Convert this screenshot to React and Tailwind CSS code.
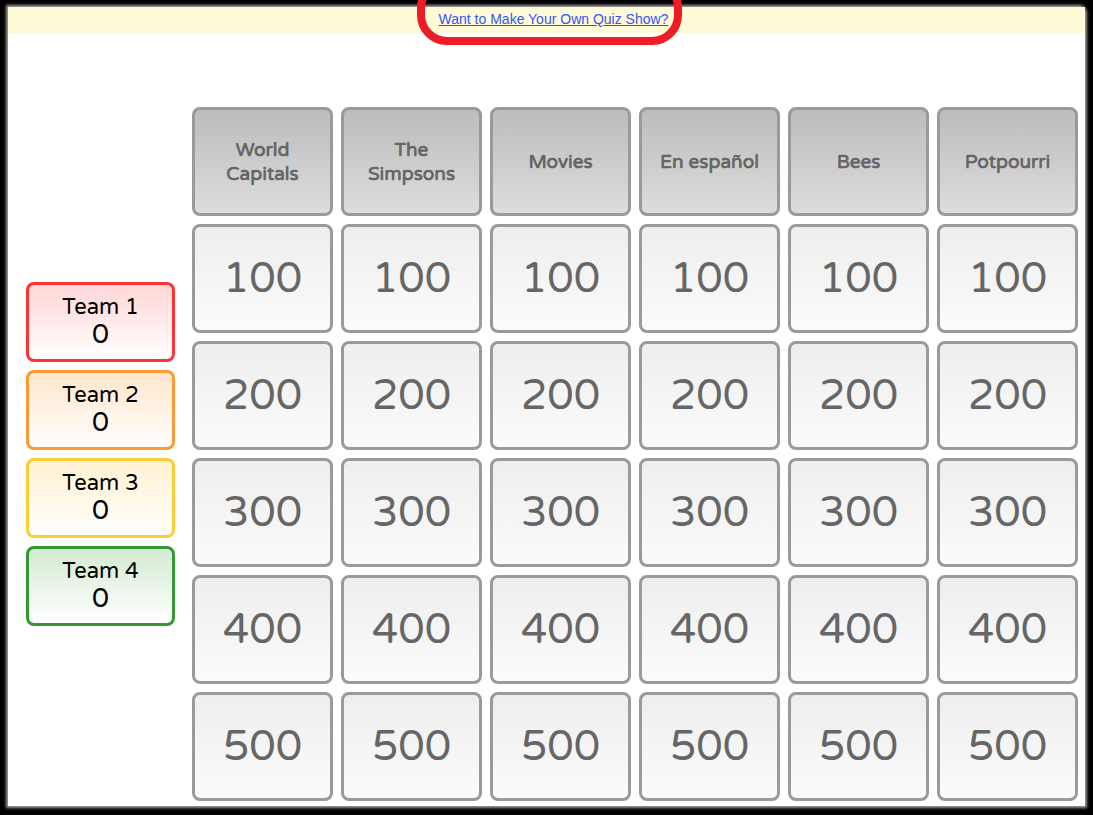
const categories = [
  ['World', 'Capitals'],
  ['The', 'Simpsons'],
  ['Movies'],
  ['En español'],
  ['Bees'],
  ['Potpourri'],
];

const values = [100, 200, 300, 400, 500];

const teams = [
  { name: 'Team 1', cls: 'border-[#ff3333] bg-gradient-to-b from-[#ffd6d6] to-white' },
  { name: 'Team 2', cls: 'border-[#ff9933] bg-gradient-to-b from-[#ffe6cc] to-white' },
  { name: 'Team 3', cls: 'border-[#ffcc33] bg-gradient-to-b from-[#fff2d1] to-white' },
  { name: 'Team 4', cls: 'border-[#339933] bg-gradient-to-b from-[#d3ead3] to-white' },
];

const font = { fontFamily: '"Varela Round", "Open Sans", "Noto Sans", sans-serif' };

export default function App() {
  return (
    <div className="w-[1093px] h-[815px] bg-black overflow-hidden relative">
      {/* red annotation round the link */}
      <div className="absolute left-[417px] top-[-22px] w-[265px] h-[67px] border-[8px] border-[#ee1c25] rounded-[30px] z-10 pointer-events-none" />

      <div className="ml-[8px] mt-[7px] w-[1077px] h-[799px] bg-white rounded-tr-[6px] shadow-[0_0_3px_2px_rgba(200,200,200,0.8)] flex flex-col">
        {/* banner */}
        <div className="h-[26px] bg-[#fffbd6] flex items-center justify-center pl-[14px] pb-[1px]">
          <a
            href="#"
            className="text-[14px] text-[#3355ff] underline"
            style={{ fontFamily: '"Liberation Sans", Arial, sans-serif' }}
          >
            Want to Make Your Own Quiz Show?
          </a>
        </div>

        <div className="flex items-center pl-[18px] mt-[74px]" style={font}>
          {/* teams */}
          <div className="w-[149px] flex flex-col gap-[8px]">
            {teams.map((t) => (
              <div
                key={t.name}
                className={`h-[80px] rounded-[8px] border-[3px] flex flex-col items-center justify-center text-black ${t.cls}`}
              >
                <div className="text-[22px] leading-[26px]">{t.name}</div>
                <div className="text-[27px] leading-[30px]">0</div>
              </div>
            ))}
          </div>

          {/* board */}
          <div className="ml-[17px] grid grid-cols-[repeat(6,141px)] gap-[8px]">
            {categories.map((c, i) => (
              <div
                key={i}
                className="h-[109px] rounded-[8px] border-[3px] border-[#9a9a9a] bg-gradient-to-b from-[#bcbcbc] to-[#dddddd] flex flex-col items-center justify-center text-[#666666] text-[19px] leading-[24px] font-bold"
              >
                {c.map((line) => (
                  <span key={line}>{line}</span>
                ))}
              </div>
            ))}
            {values.map((v) =>
              categories.map((_, i) => (
                <div
                  key={`${v}-${i}`}
                  className="h-[109px] rounded-[8px] border-[3px] border-[#9a9a9a] bg-gradient-to-b from-[#eeeeee] to-[#fbfbfb] flex items-center justify-center text-[#666666] text-[42px]"
                >
                  {v}
                </div>
              ))
            )}
          </div>
        </div>
      </div>
    </div>
  );
}
